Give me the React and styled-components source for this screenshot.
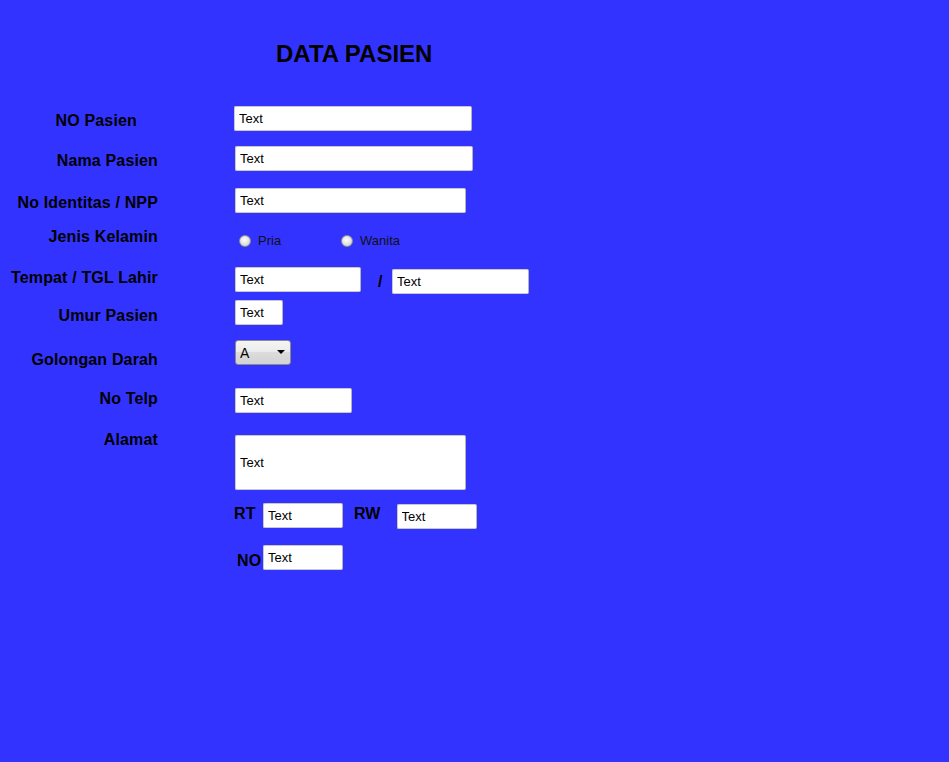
import React from 'react';
import styled, { createGlobalStyle } from 'styled-components';

const GlobalStyle = createGlobalStyle`
  html, body {
    margin: 0;
    background: #3333ff;
  }

  body {
    font-family: "Liberation Sans", Arial, sans-serif;
    color: #000;
  }
`;

const Page = styled.div`
  min-height: 762px;
  background: #3333ff;
`;

const Title = styled.h1`
  margin: 0;
  padding: 41px 0 0 276px;
  font-size: 24px;
  line-height: 26px;
  font-weight: 700;
`;

const Form = styled.div`
  margin-top: 39px;
  display: flex;
  flex-direction: column;
`;

const Row = styled.div`
  display: flex;
  align-items: flex-start;
  height: ${props => (props.$h ? `${props.$h}px` : 'auto')};
`;

const Label = styled.div`
  width: 158px;
  flex-shrink: 0;
  box-sizing: border-box;
  padding-right: ${props => props.$pr || 0}px;
  padding-top: ${props => props.$dy || 0}px;
  text-align: right;
  font-size: 16px;
  font-weight: 700;
  line-height: 18px;
  letter-spacing: 0.15px;
  white-space: nowrap;
`;

const Field = styled.div`
  margin-left: ${props => 77 + (props.$dx || 0)}px;
  padding-top: ${props => props.$dy || 0}px;
  display: flex;
  flex-direction: ${props => (props.$column ? 'column' : 'row')};
  align-items: flex-start;
`;

const SubRow = styled.div`
  display: flex;
  align-items: flex-start;
  margin-top: ${props => props.$mt || 0}px;
`;

const TextInput = styled.input`
  box-sizing: border-box;
  width: ${props => props.$w}px;
  height: ${props => props.$h || 25}px;
  margin: ${props => props.$dy || 0}px 0 0 0;
  padding: 0 4px;
  border: 1px solid #c9c9c9;
  border-right-color: #b5b5b5;
  border-radius: 2px;
  background: #fff;
  font: 13px "Liberation Sans", Arial, sans-serif;
  color: #000;
  outline: none;
`;

const InlineLabel = styled.span`
  font-size: 16px;
  font-weight: 700;
  line-height: 18px;
  letter-spacing: 0.15px;
  white-space: nowrap;
  margin: ${props => props.$dy || 0}px ${props => props.$mr || 0}px 0 ${props => props.$ml || 0}px;
`;

const RadioGroup = styled.div`
  display: flex;
  align-items: center;
  height: 16px;
  margin: 6px 0 0 4px;
`;

const RadioOption = styled.label`
  display: flex;
  align-items: center;
  gap: 7px;
  min-width: ${props => props.$w || 0}px;
  font-size: 13px;
  line-height: 16px;
  color: #111;
`;

const RadioDot = styled.span`
  box-sizing: border-box;
  width: 12px;
  height: 12px;
  border-radius: 50%;
  border: 1px solid #8e8e8e;
  background: radial-gradient(circle at 45% 40%, #ffffff 0%, #e6e6e6 45%, #c4c4c4 100%);
`;

const SelectWrap = styled.div`
  position: relative;
  width: 56px;
  height: 25px;
`;

const Select = styled.select`
  appearance: none;
  box-sizing: border-box;
  width: 100%;
  height: 100%;
  margin: 0;
  padding: 0 0 0 4px;
  border: 1px solid #8a8a8a;
  border-radius: 3px;
  background: linear-gradient(#f4f4f4 0%, #ececec 45%, #dcdcdc 50%, #d2d2d2 100%);
  font: 14px "Liberation Sans", Arial, sans-serif;
  color: #000;
  outline: none;
`;

const Caret = styled.span`
  position: absolute;
  right: 6px;
  top: 10px;
  width: 0;
  height: 0;
  border-left: 4px solid transparent;
  border-right: 4px solid transparent;
  border-top: 4px solid #000;
  pointer-events: none;
`;

export default function App() {
  return (
    <Page>
      <GlobalStyle />
      <Title>DATA PASIEN</Title>
      <Form>
        <Row $h={40}>
          <Label $dy={6} $pr={21}>NO Pasien</Label>
          <Field $dx={-1}>
            <TextInput $w={238} defaultValue="Text" />
          </Field>
        </Row>
        <Row $h={42}>
          <Label $dy={5.5}>Nama Pasien</Label>
          <Field>
            <TextInput $w={238} defaultValue="Text" />
          </Field>
        </Row>
        <Row $h={39}>
          <Label $dy={6}>No Identitas / NPP</Label>
          <Field>
            <TextInput $w={231} defaultValue="Text" />
          </Field>
        </Row>
        <Row $h={40}>
          <Label $dy={1}>Jenis Kelamin</Label>
          <Field>
            <RadioGroup>
              <RadioOption $w={102}>
                <RadioDot />
                Pria
              </RadioOption>
              <RadioOption>
                <RadioDot />
                Wanita
              </RadioOption>
            </RadioGroup>
          </Field>
        </Row>
        <Row $h={33}>
          <Label $dy={2}>Tempat / TGL Lahir</Label>
          <Field>
            <TextInput $w={126} defaultValue="Text" />
            <InlineLabel $dy={6} $ml={17} $mr={9.4}>/</InlineLabel>
            <TextInput $w={137} $dy={2} defaultValue="Text" />
          </Field>
        </Row>
        <Row $h={40}>
          <Label $dy={6.5}>Umur Pasien</Label>
          <Field>
            <TextInput $w={48} defaultValue="Text" />
          </Field>
        </Row>
        <Row $h={48}>
          <Label $dy={10.5}>Golongan Darah</Label>
          <Field>
            <SelectWrap>
              <Select defaultValue="A">
                <option>A</option>
                <option>B</option>
                <option>AB</option>
                <option>O</option>
              </Select>
              <Caret />
            </SelectWrap>
          </Field>
        </Row>
        <Row $h={41}>
          <Label $dy={2}>No Telp</Label>
          <Field>
            <TextInput $w={117} defaultValue="Text" />
          </Field>
        </Row>
        <Row>
          <Label $dy={1.5}>Alamat</Label>
          <Field $column $dy={6}>
            <TextInput $w={231} $h={55} defaultValue="Text" />
            <SubRow $mt={13}>
              <InlineLabel $dy={2} $ml={-1} $mr={7.3}>RT</InlineLabel>
              <TextInput $w={80} defaultValue="Text" />
              <InlineLabel $dy={2} $ml={11} $mr={16}>RW</InlineLabel>
              <TextInput $w={80} $dy={1} defaultValue="Text" />
            </SubRow>
            <SubRow $mt={16}>
              <InlineLabel $dy={7} $ml={2} $mr={1.7}>NO</InlineLabel>
              <TextInput $w={80} defaultValue="Text" />
            </SubRow>
          </Field>
        </Row>
      </Form>
    </Page>
  );
}
